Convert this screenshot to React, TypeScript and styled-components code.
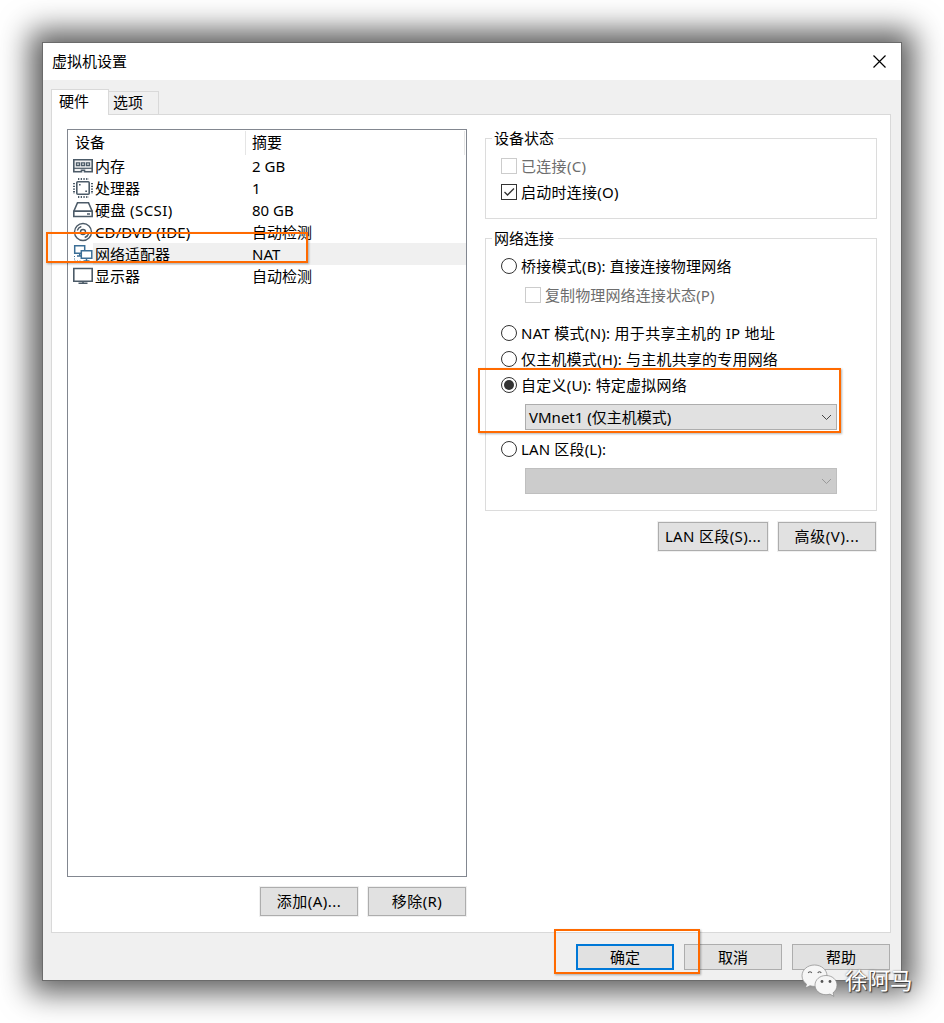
import styled, { createGlobalStyle } from "styled-components";
import { useState } from "react";

const GlobalStyle = createGlobalStyle`
  * {
    box-sizing: border-box;
  }
  body {
    margin: 0;
    background-color: #fff;
    color: #000;
    font-family: "Noto Sans", "Noto Sans CJK SC", sans-serif;
    font-size: 15px;
    overflow: hidden;
  }
`;

const Desktop = styled.div`
  position: relative;
  width: 944px;
  height: 1023px;
  padding: 42px;
  overflow: hidden;
`;
const Dialog = styled.div`
  width: 860px;
  height: 939px;
  border: 1px solid #6b6b6b;
  background-color: #f0f0f0;
  box-shadow: 0 0 28px 12px rgba(0, 0, 0, 0.63);
`;
const TitleBar = styled.div`
  display: flex;
  align-items: center;
  justify-content: space-between;
  height: 37px;
  padding: 0 15px 0 9px;
  background-color: #fff;
  span {
    padding-bottom: 2px;
  }
`;
const Tabs = styled.div`
  display: flex;
  align-items: flex-end;
  height: 34px;
  padding-left: 8px;
`;
const Tab = styled.div<{ $active?: boolean }>`
  width: ${(props) => (props.$active ? 58 : 50)}px;
  height: ${(props) => (props.$active ? 26 : 23)}px;
  margin-bottom: ${(props) => (props.$active ? -1 : 0)}px;
  padding-left: ${(props) => (props.$active ? 7 : 4)}px;
  border: 1px solid #d9d9d9;
  border-bottom: none;
  border-left-width: ${(props) => (props.$active ? 1 : 0)}px;
  background-color: ${(props) => (props.$active ? "#fff" : "#f0f0f0")};
  line-height: ${(props) => (props.$active ? 22 : 21)}px;
  z-index: 1;
`;
const Panel = styled.div`
  display: flex;
  gap: 18px;
  width: 840px;
  height: 819px;
  margin-left: 8px;
  padding: 13px 0 0 15px;
  border: 1px solid #d9d9d9;
  background-color: #fff;
`;
const LeftColumn = styled.div`
  width: 400px;
  padding-top: 1px;
`;
const RightColumn = styled.div`
  width: 392px;
`;
const DeviceList = styled.div`
  height: 748px;
  border: 1px solid #828790;
`;
const ListHeader = styled.div`
  display: grid;
  grid-template-columns: 178px 1fr;
  height: 25px;
  padding: 1px 1px 0 0;
  line-height: 23px;
  span {
    border-right: 1px solid #e5e5e5;
  }
  span:first-child {
    padding-left: 7px;
  }
  span:last-child {
    padding-left: 6px;
  }
`;
const DeviceRow = styled.div<{ $selected: boolean }>`
  display: grid;
  grid-template-columns: 25px 159px 1fr;
  height: 22px;
  line-height: 22px;
  background: ${(props) =>
    props.$selected
      ? "linear-gradient(#f0f0f0, #f0f0f0) 25px 0 no-repeat"
      : "none"};
  svg {
    margin: 1px 0 0 5px;
  }
`;
const Label = styled.span<{ $spacing?: number }>`
  letter-spacing: ${(props) => props.$spacing || 0}px;
  white-space: nowrap;
`;
const DeviceName = styled(Label)`
  padding-left: 2px;
`;
const Group = styled.fieldset<{ $height: number }>`
  min-width: 0;
  height: ${(props) => props.$height}px;
  margin: 0 0 9px;
  padding: 0;
  border: 1px solid #dcdcdc;
`;
const Legend = styled.legend`
  height: 21px;
  margin: 0 0 4px 6px;
  padding: 0 4px 0 2px;
  line-height: 21px;
`;
const Option = styled.div<{
  $indent?: boolean;
  $top?: number;
  $disabled?: boolean;
}>`
  display: flex;
  align-items: center;
  gap: 4px;
  height: 26px;
  margin-top: ${(props) => props.$top || 0}px;
  padding-left: ${(props) => (props.$indent ? 39 : 15)}px;
  color: ${(props) => (props.$disabled ? "#6d6d6d" : "#000")};
  line-height: 26px;
`;
const CheckBox = styled.span<{ $disabled?: boolean }>`
  display: flex;
  flex-shrink: 0;
  width: 16px;
  height: 16px;
  border: 1px solid ${(props) => (props.$disabled ? "#ccc" : "#333")};
  background-color: #fff;
`;
const Radio = styled.span<{ $checked: boolean }>`
  display: flex;
  flex-shrink: 0;
  align-items: center;
  justify-content: center;
  width: 16px;
  height: 16px;
  border: 1px solid #333;
  border-radius: 50%;
  &::after {
    content: "";
    width: 10px;
    height: 10px;
    border-radius: 50%;
    background-color: ${(props) => (props.$checked ? "#333" : "transparent")};
  }
`;
const Combo = styled.div<{ $disabled?: boolean }>`
  display: flex;
  align-items: center;
  justify-content: space-between;
  width: 312px;
  height: 26px;
  margin: 6px 0 6px 39px;
  padding: 0 4px 0 3px;
  border: 1px solid ${(props) => (props.$disabled ? "#bfbfbf" : "#adadad")};
  background-color: ${(props) => (props.$disabled ? "#ccc" : "#e1e1e1")};
  line-height: 24px;
`;
const Buttons = styled.div<{ $top: number; $right: number }>`
  display: flex;
  justify-content: flex-end;
  gap: 10px;
  margin-top: ${(props) => props.$top}px;
  padding-right: ${(props) => props.$right}px;
`;
const Button = styled.button<{
  $width?: number;
  $height?: number;
  $primary?: boolean;
}>`
  width: ${(props) => props.$width || 98}px;
  height: ${(props) => props.$height || 29}px;
  padding: 0 0 ${(props) => (props.$height ? 0 : 2)}px;
  border: ${(props) =>
    props.$primary ? "2px solid #0078d7" : "1px solid #adadad"};
  background-color: #e1e1e1;
  box-shadow: 0 0 0 1px #f0f0f0;
  color: #000;
  font: inherit;
  line-height: 20px;
`;

// 강조 표시용 주황색 테두리입니다.
const Highlight = styled.div<{ $x: number; $y: number; $w: number; $h: number }>`
  position: absolute;
  left: ${(props) => props.$x}px;
  top: ${(props) => props.$y}px;
  width: ${(props) => props.$w}px;
  height: ${(props) => props.$h}px;
  border: 2px solid #ff6a00;
  box-shadow: 1px 1px 2px rgba(0, 0, 0, 0.3);
`;
const Watermark = styled.div`
  position: absolute;
  left: 800px;
  top: 963px;
  display: flex;
  align-items: center;
  gap: 7px;
  color: #fff;
  font-size: 22.5px;
  line-height: 36px;
  text-shadow: 1px 1px 1px #333, 0 0 2px #777;
`;

const DeviceIcon = ({ name }: { name: string }) => {
  const line = { fill: "none", stroke: "#4c5b68", strokeWidth: 1.6 };
  return (
    <svg width="20" height="20" viewBox="0 0 20 20">
      {name === "memory" && (
        <g {...line}>
          <path
            d="M.8 3.800h18.400v12H11.500v-1.500h-3v1.500H.8z"
            fill="#f1f1f1"
          />
          <path
            d="M3.500 6.800h3v2.700h-3zM8.500 6.800h3v2.700h-3zM13.500 6.800h3v2.700h-3z"
            strokeWidth="1.300"
          />
          <path d="M1 12.300h18" strokeWidth="1.200" />
        </g>
      )}
      {name === "cpu" && (
        <g {...line}>
          <rect x="3.800" y="3.800" width="12.400" height="12.400" rx="1" />
          <path
            d="M5 1h11M5 19h11M1 5v11M19 5v11"
            strokeWidth="2"
            strokeDasharray="1.300 1.400"
          />
          <path d="M6 6.800h1.600M12.300 13.300H14" strokeWidth="1.600" />
        </g>
      )}
      {name === "disk" && (
        <g {...line}>
          <path d="M4.500 2.800h11l3.700 8.500H.8z" />
          <path d="M.8 11.300h18.400v5.200H.8zM14 14h3" />
        </g>
      )}
      {name === "cd" && (
        <g {...line} strokeWidth="1.400">
          <circle cx="10" cy="10" r="8.500" />
          <circle cx="10" cy="10" r="2.500" />
          <path d="M4.300 8.500a6 6 0 0 1 4-4M15.700 11.500a6 6 0 0 1-4 4" />
        </g>
      )}
      {name === "network" && (
        <g {...line} stroke="#3b6e96" strokeWidth="1.500">
          <path d="M1.700 1.800h10v7.500h-10zM4 12h5M6.700 9.300V12" />
          <path d="M8.300 6.800h10.500v7.500H8.300z" fill="#fff" />
          <path d="M13.500 14.300v2.500M10.500 17h6" />
          <path d="M1.500 12v5H9" strokeDasharray="1 1.500" strokeWidth="1" />
        </g>
      )}
      {name === "display" && (
        <g {...line}>
          <path d="M.8 2.500h18.400v12.700H.8z" />
          <path d="M10 15v2M5.500 17.200h9" />
        </g>
      )}
    </svg>
  );
};

const Arrow = ({ color }: { color: string }) => (
  <svg width="11" height="8" viewBox="0 0 11 8">
    <path d="M1 2l4.500 4.500L10 2" fill="none" stroke={color} />
  </svg>
);

const devices = [
  { icon: "memory", name: "内存", summary: "2 GB", spacing: 0 },
  { icon: "cpu", name: "处理器", summary: "1", spacing: 0 },
  { icon: "disk", name: "硬盘 (SCSI)", summary: "80 GB", spacing: 0.4 },
  { icon: "cd", name: "CD/DVD (IDE)", summary: "自动检测", spacing: 0.1 },
  { icon: "network", name: "网络适配器", summary: "NAT", spacing: 0 },
  { icon: "display", name: "显示器", summary: "自动检测", spacing: 0 },
];

const App = () => {
  const [selected, setSelected] = useState<string>("network");
  const [mode, setMode] = useState<string>("custom");

  return (
    <Desktop>
      <GlobalStyle />
      <Dialog>
        <TitleBar>
          <span>虚拟机设置</span>
          <svg width="13" height="13" viewBox="0 0 13 13">
            <path d="M.5.5l12 12M12.500.5l-12 12" stroke="#000" strokeWidth="1.200" />
          </svg>
        </TitleBar>
        <Tabs>
          <Tab $active>硬件</Tab>
          <Tab>选项</Tab>
        </Tabs>
        <Panel>
          <LeftColumn>
            <DeviceList>
              <ListHeader>
                <span>设备</span>
                <span>摘要</span>
              </ListHeader>
              {devices.map((device) => (
                <DeviceRow
                  key={device.icon}
                  $selected={device.icon === selected}
                  onClick={() => setSelected(device.icon)}
                >
                  <DeviceIcon name={device.icon} />
                  <DeviceName $spacing={device.spacing}>
                    {device.name}
                  </DeviceName>
                  <Label>{device.summary}</Label>
                </DeviceRow>
              ))}
            </DeviceList>
            <Buttons $top={10} $right={1}>
              <Button>
                <Label $spacing={0.5}>添加(A)...</Label>
              </Button>
              <Button>
                <Label $spacing={0.4}>移除(R)</Label>
              </Button>
            </Buttons>
          </LeftColumn>
          <RightColumn>
            <Group $height={91}>
              <Legend>设备状态</Legend>
              <Option $disabled>
                <CheckBox $disabled />
                <Label $spacing={0.3}>已连接(C)</Label>
              </Option>
              <Option>
                <CheckBox>
                  <svg width="14" height="14" viewBox="0 0 14 14">
                    <path
                      d="M2.500 7l3 3L12 3.500"
                      fill="none"
                      stroke="#333"
                      strokeWidth="1.300"
                    />
                  </svg>
                </CheckBox>
                <Label $spacing={0.25}>启动时连接(O)</Label>
              </Option>
            </Group>
            <Group $height={283}>
              <Legend>网络连接</Legend>
              <Option onClick={() => setMode("bridge")}>
                <Radio $checked={mode === "bridge"} />
                <Label $spacing={0.24}>桥接模式(B): 直接连接物理网络</Label>
              </Option>
              <Option $indent $disabled $top={3}>
                <CheckBox $disabled />
                <Label $spacing={0.12}>复制物理网络连接状态(P)</Label>
              </Option>
              <Option $top={12} onClick={() => setMode("nat")}>
                <Radio $checked={mode === "nat"} />
                <Label $spacing={0.28}>
                  NAT 模式(N): 用于共享主机的 IP 地址
                </Label>
              </Option>
              <Option onClick={() => setMode("host")}>
                <Radio $checked={mode === "host"} />
                <Label $spacing={0.2}>仅主机模式(H): 与主机共享的专用网络</Label>
              </Option>
              <Option onClick={() => setMode("custom")}>
                <Radio $checked={mode === "custom"} />
                <Label $spacing={0.22}>自定义(U): 特定虚拟网络</Label>
              </Option>
              <Combo>
                <Label>VMnet1 (仅主机模式)</Label>
                <Arrow color="#444" />
              </Combo>
              <Option onClick={() => setMode("lan")}>
                <Radio $checked={mode === "lan"} />
                <Label $spacing={0.15}>LAN 区段(L):</Label>
              </Option>
              <Combo $disabled>
                <span />
                <Arrow color="#9a9a9a" />
              </Combo>
            </Group>
            <Buttons $top={11} $right={1}>
              <Button $width={110}>
                <Label $spacing={0.35}>LAN 区段(S)...</Label>
              </Button>
              <Button>
                <Label $spacing={0.6}>高级(V)...</Label>
              </Button>
            </Buttons>
          </RightColumn>
        </Panel>
        <Buttons $top={11} $right={11}>
          <Button $height={26} $primary>
            确定
          </Button>
          <Button $height={26}>取消</Button>
          <Button $height={26}>帮助</Button>
        </Buttons>
      </Dialog>
      <Highlight $x={46} $y={232} $w={262} $h={31} />
      <Highlight $x={478} $y={368} $w={363} $h={65} />
      <Highlight $x={554} $y={929} $w={146} $h={45} />
      <Watermark>
        <svg width="38" height="36" viewBox="0 0 38 36">
          <g fill="#f6f6f6" stroke="#888" strokeWidth="0.700">
            <path d="M14.500 2C7.500 2 2 6.800 2 12.800c0 3.400 1.800 6.300 4.500 8.300L5.500 25l4.500-2.300c1.400.4 2.900.7 4.500.7 7 0 12.500-4.700 12.500-10.600S21.500 2 14.500 2z" />
            <path d="M26 12.500c-6.200 0-11 4.200-11 9.600s4.800 9.600 11 9.600c1.400 0 2.700-.2 3.900-.6l4 2.200-.9-3.500c2.500-1.800 4-4.500 4-7.700 0-5.400-4.800-9.600-11-9.600z" />
          </g>
          <g fill="none" stroke="#555" strokeWidth="1.100">
            <path d="M8.300 10a1.800 1.800 0 0 1 3.400 0M17.800 10a1.800 1.800 0 0 1 3.400 0" />
          </g>
          <g fill="#555">
            <circle cx="22" cy="18.500" r="1.400" />
            <circle cx="30" cy="18.500" r="1.400" />
          </g>
        </svg>
        <span>徐阿马</span>
      </Watermark>
    </Desktop>
  );
};

export default App;
